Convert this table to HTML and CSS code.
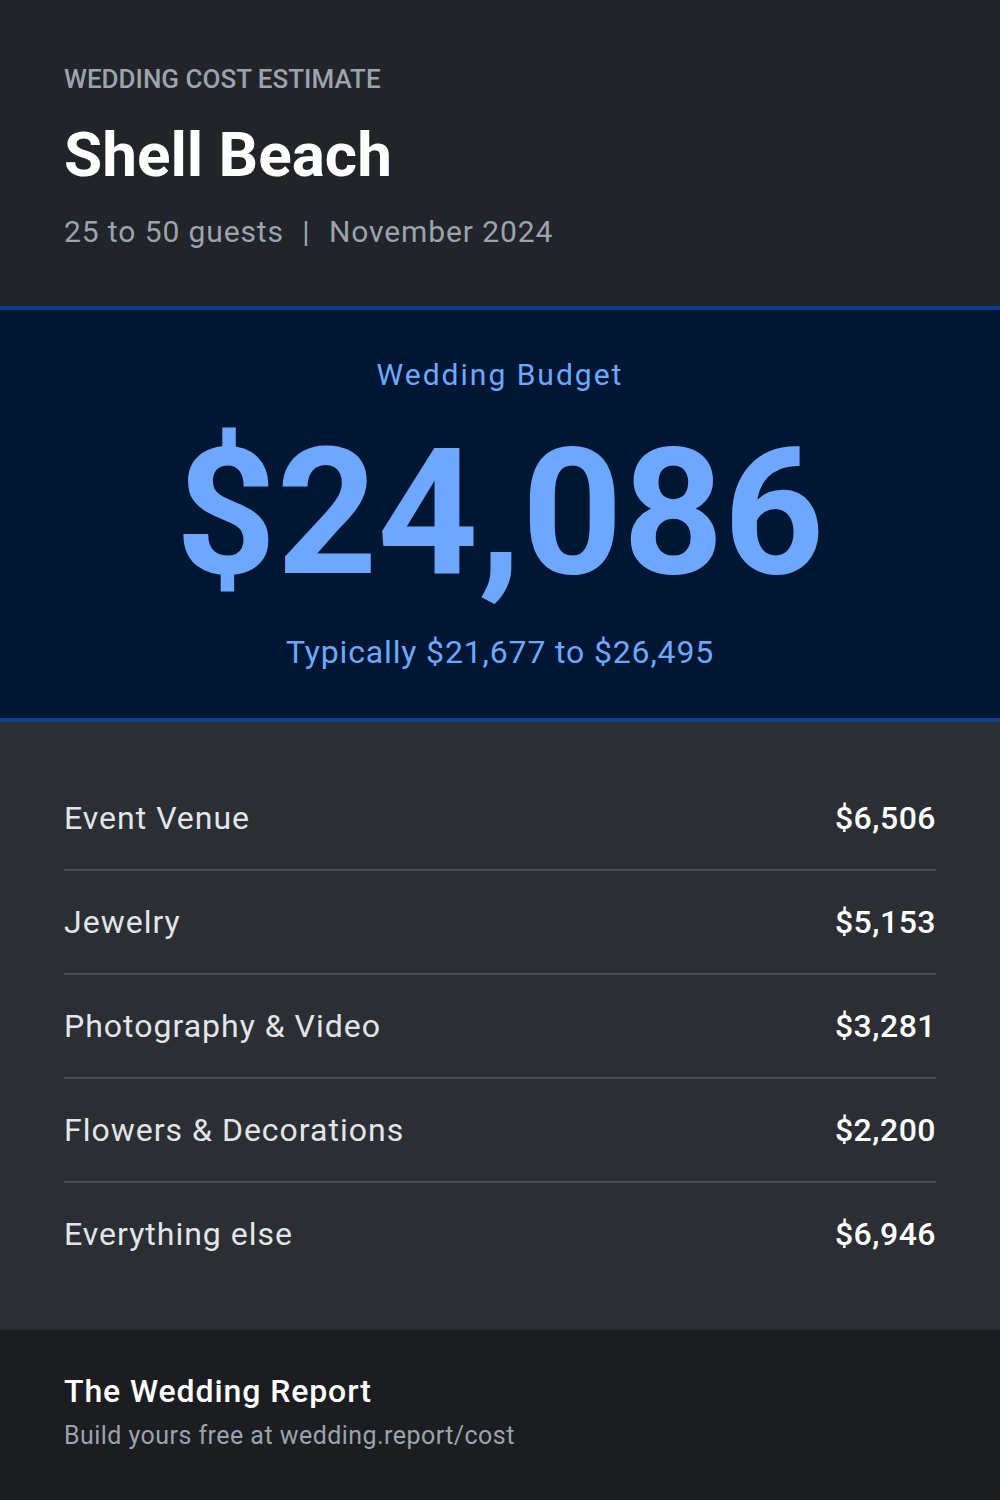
FILE: index.html
```html
<!DOCTYPE html>
<html lang="en">
<head>
    <meta charset="UTF-8">
    <title>Wedding Cost Estimate - Shell Beach</title>
    <link rel="stylesheet" href="styles.css">
</head>
<body>
    <!-- 상단 헤더 -->
    <header class="top">
        <p class="eyebrow">WEDDING COST ESTIMATE</p>
        <h1 class="place">Shell Beach</h1>
        <p class="meta">25 to 50 guests <span class="bar">|</span> November 2024</p>
    </header>

    <!-- 총 예산 -->
    <section class="budget">
        <p class="budget-label">Wedding Budget</p>
        <p class="budget-total">$24,086</p>
        <p class="budget-range">Typically $21,677 to $26,495</p>
    </section>

    <!-- 항목별 비용 -->
    <section class="items">
        <ul>
            <li><span class="name">Event Venue</span><span class="cost">$6,506</span></li>
            <li><span class="name">Jewelry</span><span class="cost">$5,153</span></li>
            <li><span class="name">Photography &amp; Video</span><span class="cost">$3,281</span></li>
            <li><span class="name">Flowers &amp; Decorations</span><span class="cost">$2,200</span></li>
            <li><span class="name">Everything else</span><span class="cost">$6,946</span></li>
        </ul>
    </section>

    <!-- 하단 -->
    <footer class="foot">
        <p class="brand">The Wedding Report</p>
        <p class="cta">Build yours free at wedding.report/cost</p>
    </footer>
</body>
</html>
```
FILE: styles.css
```css
html,body{
    margin: 0; padding: 0;
}
body{
    font-family: Roboto, "Liberation Sans", sans-serif;
    background-color: #1b1d20;
}
p,h1{
    margin: 0;
}

/* 헤더 */
.top{
    background-color: #212429;
    padding: 64px 64px 56px;
}
.eyebrow{
    font-size: 26px; line-height: 31px; font-weight: 500;
    color: #9ba3ac;
}
.place{
    margin-top: 20px;
    font-size: 62px; line-height: 79px; font-weight: bold;
    color: #fff;
}
.meta{
    margin-top: 20px;
    font-size: 30px; line-height: 36px; letter-spacing: 0.9px;
    color: #9ba3ac;
}
.bar{
    padding: 0 10px;
}

/* 예산 */
.budget{
    background-color: #011633;
    border-top: 4px solid #0d3f8f;
    border-bottom: 4px solid #0d3f8f;
    padding: 47px 0 47px;
    text-align: center;
    color: #6ea8fe;
}
.budget-label{
    font-size: 30px; line-height: 36px; letter-spacing: 2px;
}
.budget-total{
    margin-top: 32px;
    font-size: 176px; line-height: 176px; font-weight: bold;
}
.budget-range{
    margin-top: 32px;
    font-size: 32px; line-height: 38px; letter-spacing: 0.85px;
}

/* 항목 리스트 */
.items{
    background-color: #2b2f33;
    padding: 45px 64px;
}
.items ul{
    margin: 0; padding: 0; list-style: none;
}
.items li{
    display: flex; justify-content: space-between; align-items: center;
    padding: 32px 0;
    font-size: 32px; line-height: 38px;
    border-bottom: 2px solid #474b52;
}
.items li:last-child{
    border-bottom: none;
}
.name{
    color: #e2e5e9; letter-spacing: 1px;
}
.cost{
    color: #fff; font-weight: 500; letter-spacing: 0.5px;
}

/* 푸터 */
.foot{
    padding: 42px 64px 49px;
}
.brand{
    font-size: 32px; line-height: 38px; font-weight: 500; letter-spacing: 0.9px;
    color: #fff;
}
.cta{
    margin-top: 11px;
    font-size: 25px; line-height: 30px; letter-spacing: 0.45px;
    color: #9ba3ac;
}
```
